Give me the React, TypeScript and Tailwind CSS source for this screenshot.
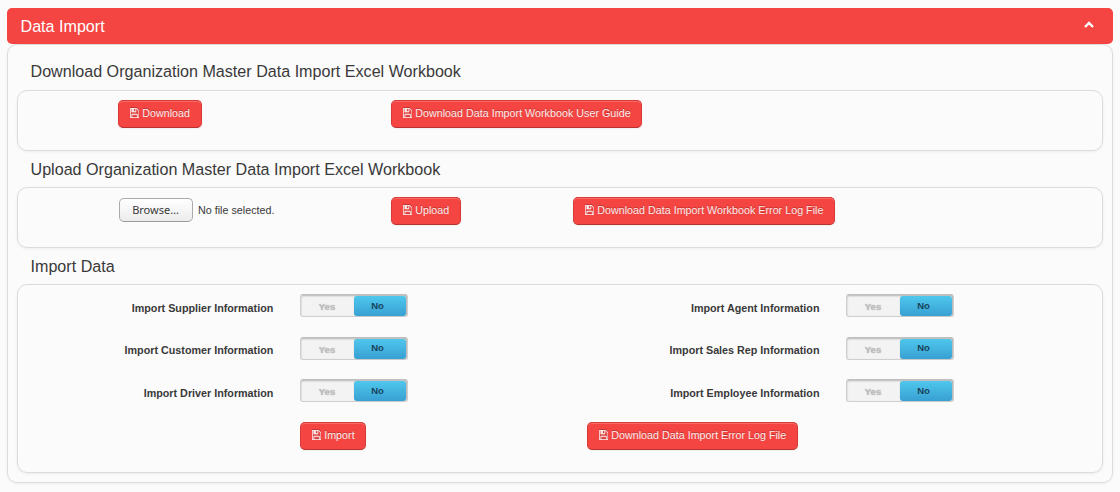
import React, { useState } from 'react';

function SaveIcon() {
  return (
    <svg viewBox="0 128 1536 1536" className="mr-[3.2px] mb-px h-[10px] w-[9.3px] drop-shadow-[0_-1px_0_rgba(0,0,0,0.25)]" preserveAspectRatio="none" fill="currentColor" stroke="currentColor" strokeWidth="20" aria-hidden="true">
      <path d="M384 1536h768v-384h-768v384zm896 0h128v-896q0-14-10-38.5t-20-34.5l-281-281q-10-10-34-20t-39-10v416q0 40-28 68t-68 28h-576q-40 0-68-28t-28-68v-416h-128v1280h128v-416q0-40 28-68t68-28h832q40 0 68 28t28 68v416zm-384-928v-320q0-13-9.5-22.5t-22.5-9.5h-192q-13 0-22.5 9.5t-9.5 22.5v320q0 13 9.5 22.5t22.5 9.5h192q13 0 22.5-9.5t9.5-22.5zm640 32v928q0 40-28 68t-68 28h-1344q-40 0-68-28t-28-68v-1344q0-40 28-68t68-28h928q40 0 88 20t76 48l280 280q28 28 48 76t20 88z" />
    </svg>
  );
}

function ActionButton({ label, className }: { label: string; className: string }) {
  return (
    <button
      type="button"
      className={`flex h-7 shrink-0 items-center rounded-[5px] border border-[#d93a36] border-b-[#b83330] bg-[#f44542] pb-px pl-[10.7px] text-[10.75px] leading-none whitespace-nowrap text-white/90 shadow-[inset_0_1px_0_rgba(255,255,255,0.2),0_1px_2px_rgba(0,0,0,0.05)] [text-shadow:0_-1px_0_rgba(0,0,0,0.25)] ${className}`}
    >
      <SaveIcon />
      {label}
    </button>
  );
}

function Toggle() {
  const [on, setOn] = useState(false);
  const active = 'bg-linear-to-b from-[#4fc7ec] to-[#38a0d3] text-[#17445a] shadow-[0_0_1px_rgba(0,0,0,0.3)]';
  const idle = 'pt-[3px] pr-px text-[#c0c0c0] [text-shadow:0_0_1px_#aaa]';
  return (
    <button
      type="button"
      onClick={() => setOn(!on)}
      className="flex h-[23px] w-[108px] shrink-0 rounded-[3px] border border-[#cfcfcf] border-t-[#bfbfbf] bg-[#f3f3f3] pt-px text-[9.5px] font-bold shadow-[inset_0_1px_2px_rgba(0,0,0,0.25),inset_-1px_0_0_#d0d0d0]"
    >
      <span className={`flex h-5 w-[53px] items-center justify-center rounded-[3px] ${on ? active : idle}`}>Yes</span>
      <span className={`flex h-5 w-[52px] items-center justify-center rounded-[3px] pr-[5px] ${on ? idle : active}`}>No</span>
    </button>
  );
}

function Section({ title, height, children }: { title: string; height: string; children: React.ReactNode }) {
  return (
    <section className="group">
      <h2 className="flex h-9 items-center pl-[13.5px] text-[16.13px] leading-5 text-[#393939] group-first:pb-[2px]">{title}</h2>
      <div className={`rounded-[10px] border border-[#dcdcdc] shadow-[0_1px_3px_rgba(0,0,0,0.06)] ${height}`}>{children}</div>
    </section>
  );
}

const rows = [
  ['Import Supplier Information', 'Import Agent Information'],
  ['Import Customer Information', 'Import Sales Rep Information'],
  ['Import Driver Information', 'Import Employee Information'],
];

export default function App() {
  return (
    <main className="h-[492px] bg-[#fbfbfb] px-[7px] pt-2 font-['Liberation_Sans',Arial,sans-serif] text-[10.75px] text-[#393939]">
      <header className="flex h-9 items-center justify-between rounded-[5px] bg-[#f44542] pt-px pr-[19px] pl-[13.5px] text-[16.13px] text-white">
        <h1>Data Import</h1>
        <svg viewBox="0 0 10 7" className="mb-[4px] h-[7px] w-[10px]" fill="none" stroke="white" strokeWidth="2.4" aria-hidden="true">
          <path d="M1 6L5 2L9 6" />
        </svg>
      </header>
      <div className="h-[439px] rounded-[10px] border border-[#dcdcdc] px-[9px] pt-[9px] shadow-[0_1px_3px_rgba(0,0,0,0.06)]">
        <Section title="Download Organization Master Data Import Excel Workbook" height="h-[61px]">
          <div className="flex pt-[9px] pl-[100px]">
            <ActionButton label="Download" className="w-[84px]" />
            <ActionButton label="Download Data Import Workbook User Guide" className="ml-[189px] w-[251px]" />
          </div>
        </Section>
        <Section title="Upload Organization Master Data Import Excel Workbook" height="h-[61px]">
          <div className="flex pt-[9px] pl-[101px]">
            <div className="flex w-[272px] items-center">
              <button
                type="button"
                className="mb-[2px] h-6 w-[74px] rounded-[5px] border border-[#aaa] border-b-[#999] bg-linear-to-b from-white to-[#ececec] pr-px pb-px font-['Noto_Sans',sans-serif] text-[11px] leading-none"
              >
                Browse…
              </button>
              <span className="mb-px pl-[5px]">No file selected.</span>
            </div>
            <ActionButton label="Upload" className="w-[70px]" />
            <ActionButton label="Download Data Import Workbook Error Log File" className="ml-[112px] w-[262px]" />
          </div>
        </Section>
        <Section title="Import Data" height="h-[189px]">
          <div className="grid gap-[18.5px] pt-[9px]">
            {rows.map(([left, right]) => (
              <div key={left} className="flex h-6">
                <span className="w-[255.3px] pt-[5.8px] text-right leading-4 font-bold">{left}</span>
                <div className="ml-[26.7px]"><Toggle /></div>
                <span className="ml-[156px] w-[255.5px] pt-[5.8px] text-right leading-4 font-bold">{right}</span>
                <div className="ml-[26.5px]"><Toggle /></div>
              </div>
            ))}
          </div>
          <div className="flex pt-[19px] pl-[282px]">
            <ActionButton label="Import" className="w-[66px]" />
            <ActionButton label="Download Data Import Error Log File" className="ml-[221px] w-[211px]" />
          </div>
        </Section>
      </div>
    </main>
  );
}
